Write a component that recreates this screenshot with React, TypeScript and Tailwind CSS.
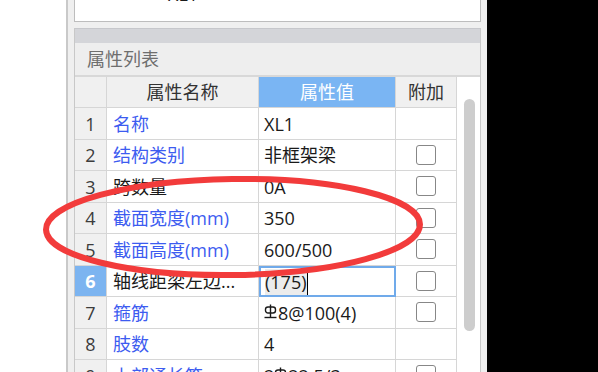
import { FC } from 'react';

interface IRow {
    no: number;
    name: string;
    value: string;
    blue: boolean;
    check: boolean;
    rebar?: boolean;
}

const rows: IRow[] = [
    { no: 1, name: '名称', value: 'XL1', blue: true, check: false },
    { no: 2, name: '结构类别', value: '非框架梁', blue: true, check: true },
    { no: 3, name: '跨数量', value: '0A', blue: false, check: true },
    { no: 4, name: '截面宽度(mm)', value: '350', blue: true, check: true },
    { no: 5, name: '截面高度(mm)', value: '600/500', blue: true, check: true },
    { no: 6, name: '轴线距梁左边...', value: '(175)', blue: false, check: true },
    { no: 7, name: '箍筋', value: '8@100(4)', blue: true, check: true, rebar: true },
    { no: 8, name: '肢数', value: '4', blue: true, check: false },
    { no: 9, name: '上部通长筋', value: '22 5/3', blue: true, check: true, rebar: true },
];

const font = "font-['Segoe_UI','Open_Sans','Noto_Sans_CJK_SC',sans-serif]";

// HRB400 steel grade mark
const Rebar: FC = () => (
    <svg width="13" height="15" viewBox="0 0 13 15" className="mr-[1px] mb-[3px] inline-block" fill="none" stroke="#1a1a1a" strokeWidth="1.4">
        <rect x="1.5" y="3" width="10" height="6" rx="2.5" />
        <line x1="6.5" y1="0.5" x2="6.5" y2="13.5" />
        <line x1="0.5" y1="13.5" x2="12.5" y2="13.5" />
    </svg>
);

const CheckBox: FC = () => (
    <div className="w-[20px] h-[20px] rounded-[3px] border-[1.5px] border-[#878787] bg-white" />
);

const Row: FC<{ row: IRow }> = ({ row }) => {
    const selected = row.no === 6;
    return (
        <div className="grid grid-cols-[32px_152px_137px_61px] h-[31.5px] shrink-0">
            <div className={`flex items-center justify-center pt-[2px] border-r border-b border-[#d6d6d6] ${selected ? 'bg-[#7cb4f0] text-white font-bold' : 'bg-[#f0f0f0] text-[#3c3c3c]'}`}>
                {row.no}
            </div>
            <div className={`flex items-center pl-[6px] pt-[2px] border-r border-b border-[#d6d6d6] whitespace-nowrap overflow-hidden bg-white ${row.blue ? 'text-[#3d5cf0]' : 'text-[#1a1a1a]'}`}>
                {row.name}
            </div>
            {selected ? (
                <div className="flex items-center pl-[4px] pt-[1px] border-2 border-[#70aaea] bg-white text-[#1a1a1a] whitespace-nowrap">
                    <span className="bg-[#ececec] leading-[26px]">{row.value}</span>
                    <span className="w-[1.5px] h-[26px] bg-black" />
                </div>
            ) : (
                <div className="flex items-center pl-[5px] pt-[2px] border-r border-b border-[#d6d6d6] bg-white text-[#1a1a1a] whitespace-nowrap">
                    {row.rebar && row.no === 9 && <span>2</span>}
                    {row.rebar && <Rebar />}
                    {row.value}
                </div>
            )}
            <div className="flex items-center justify-center border-r border-b border-[#d6d6d6] bg-white">
                {row.check && <CheckBox />}
            </div>
        </div>
    );
};

const App: FC = () => {
    return (
        <div className={`relative flex w-[598px] h-[372px] overflow-hidden bg-white text-[18px] ${font}`}>
            <div className="w-[66px] bg-white" />
            <div className="w-[421px] flex flex-col bg-[#efefef] border-l-2 border-[#c9c9c9] px-[6px] overflow-hidden">
                <div className="h-[22px] shrink-0 bg-white border-x border-b border-[#bdbdbd] overflow-hidden flex pl-[93px]">
                    <span className="-mt-[19px] text-[#1a1a1a]">XL1</span>
                </div>
                <div className="mt-[6px] shrink-0 flex flex-col border-x border-[#c8c8c8]">
                    <div className="h-[15px] shrink-0 bg-[#d4d5d9] border-t border-[#c6c7cb]" />
                    <div className="h-[32px] shrink-0 flex items-center pl-[12px] pt-[1px] text-[#6e6e6e] bg-[#eeeeee]">属性列表</div>
                    <div className="flex shrink-0 border-t-2 border-[#d8d8d8] bg-white">
                        <div className="flex flex-col">
                            <div className="grid grid-cols-[32px_152px_137px_61px] h-[31px] shrink-0 text-[#333]">
                                <div className="bg-[#f0f0f0] border-r border-b border-[#d6d6d6]" />
                                <div className="bg-[#f0f0f0] border-r border-b border-[#d6d6d6] flex items-center justify-center pt-[1px]">属性名称</div>
                                <div className="bg-[#7ab5f3] border-r border-b border-[#d6d6d6] flex items-center justify-center pt-[1px] text-white">属性值</div>
                                <div className="bg-[#f0f0f0] border-r border-b border-[#d6d6d6] flex items-center justify-center pt-[1px]">附加</div>
                            </div>
                            {rows.map((row) => (
                                <Row key={row.no} row={row} />
                            ))}
                        </div>
                        <div className="flex-1 pt-[22px] pl-[7px]">
                            <div className="w-[11px] h-[232px] rounded-full bg-[#cdcdcd]" />
                        </div>
                    </div>
                </div>
            </div>
            <div className="flex-1 bg-black" />
            <svg className="absolute inset-0 pointer-events-none" width="598" height="372" viewBox="0 0 598 372">
                <ellipse cx="233" cy="227" rx="187" ry="48" fill="none" stroke="#f23b3b" strokeWidth="6" transform="rotate(-0.8 233 227)" />
            </svg>
        </div>
    );
};

export default App;
